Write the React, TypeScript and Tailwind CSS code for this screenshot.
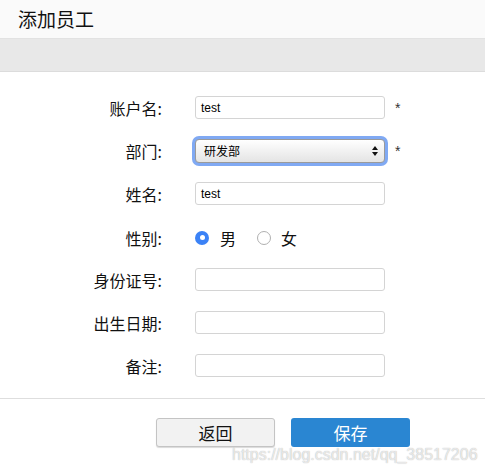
const cjk = "font-['Noto_Sans_CJK_SC',sans-serif]"

const Label = ({ text }: { text: string }) => (
    <div className={`w-[162px] text-right text-[16px] text-[#111] ${cjk}`}>{text}</div>
)

const Field = ({ value }: { value?: string }) => (
    <div className="w-[190px] h-[23px] border border-[#d4d4d4] rounded-[3px] bg-white flex items-center px-[5px] text-[12px] text-black font-['Liberation_Sans',sans-serif]">
        {value}
    </div>
)

const Star = () => <span className="ml-[10px] text-[14px] leading-none text-[#333] font-['Liberation_Sans',sans-serif]">*</span>

export default function App() {
    return (
        <div className="relative w-[485px] h-[470px] bg-white overflow-hidden">
            <div className="h-[39px] bg-[#fafafa] border-b border-[#e2e2e2] flex items-center pl-[18px]">
                <span className={`text-[19px] text-[#111] ${cjk}`}>添加员工</span>
            </div>
            <div className="h-[33px] bg-[#e8e8e8] border-b border-[#dcdcdc]"></div>

            <div className="flex flex-col gap-[20px] pt-[24px] pb-[21px] border-b border-[#dedede]">
                <div className="h-[23px] flex items-center">
                    <Label text="账户名:" />
                    <div className="ml-[33px]"><Field value="test" /></div>
                    <Star />
                </div>
                <div className="h-[23px] flex items-center">
                    <Label text="部门:" />
                    <div className="ml-[30px] p-[3px] rounded-[7px] bg-[#80a9f3]">
                        <div className="w-[190px] h-[24px] rounded-[4px] border border-[#9a9a9a] bg-gradient-to-b from-white to-[#e4e4e4] flex items-center justify-between pl-[8px] pr-[6px]">
                            <span className={`text-[12px] text-black ${cjk}`}>研发部</span>
                            <svg width="6" height="10" viewBox="0 0 6 10">
                                <path d="M3 0 L6 4 L0 4 Z" fill="#111" />
                                <path d="M0 6 L6 6 L3 10 Z" fill="#111" />
                            </svg>
                        </div>
                    </div>
                    <span className="ml-[7px] text-[14px] leading-none text-[#333] font-['Liberation_Sans',sans-serif]">*</span>
                </div>
                <div className="h-[23px] flex items-center">
                    <Label text="姓名:" />
                    <div className="ml-[33px]"><Field value="test" /></div>
                </div>
                <div className="h-[23px] flex items-center mt-[1px]">
                    <Label text="性别:" />
                    <div className="ml-[33px] flex items-center">
                        <span className="w-[14px] h-[14px] rounded-full bg-[#3b82f6] flex items-center justify-center">
                            <span className="w-[5px] h-[5px] rounded-full bg-white"></span>
                        </span>
                        <span className={`ml-[11px] text-[16px] text-[#111] ${cjk}`}>男</span>
                        <span className="ml-[21px] w-[14px] h-[14px] rounded-full border border-[#b0b0b0] bg-white"></span>
                        <span className={`ml-[10px] text-[16px] text-[#111] ${cjk}`}>女</span>
                    </div>
                </div>
                <div className="h-[23px] flex items-center -mt-[1px]">
                    <Label text="身份证号:" />
                    <div className="ml-[33px]"><Field /></div>
                </div>
                <div className="h-[23px] flex items-center">
                    <Label text="出生日期:" />
                    <div className="ml-[33px]"><Field /></div>
                </div>
                <div className="h-[23px] flex items-center">
                    <Label text="备注:" />
                    <div className="ml-[33px]"><Field /></div>
                </div>
            </div>

            <div className="flex gap-[16px] pl-[156px] pt-[19px]">
                <button className={`w-[119px] h-[29px] rounded-[3px] border border-[#c4c4c4] bg-[#f2f2f2] shadow-[0_1px_1px_rgba(0,0,0,0.15)] text-[17px] text-[#111] ${cjk}`}>返回</button>
                <button className={`w-[119px] h-[29px] rounded-[3px] bg-[#2a86d2] text-[17px] text-white ${cjk}`}>保存</button>
            </div>

            <div className="absolute left-[232px] top-[443px] text-[16px] text-white/70 font-['Liberation_Sans',sans-serif] [text-shadow:0_0_1px_rgba(0,0,0,0.35)]">
                https://blog.csdn.net/qq_38517206
            </div>
        </div>
    )
}
